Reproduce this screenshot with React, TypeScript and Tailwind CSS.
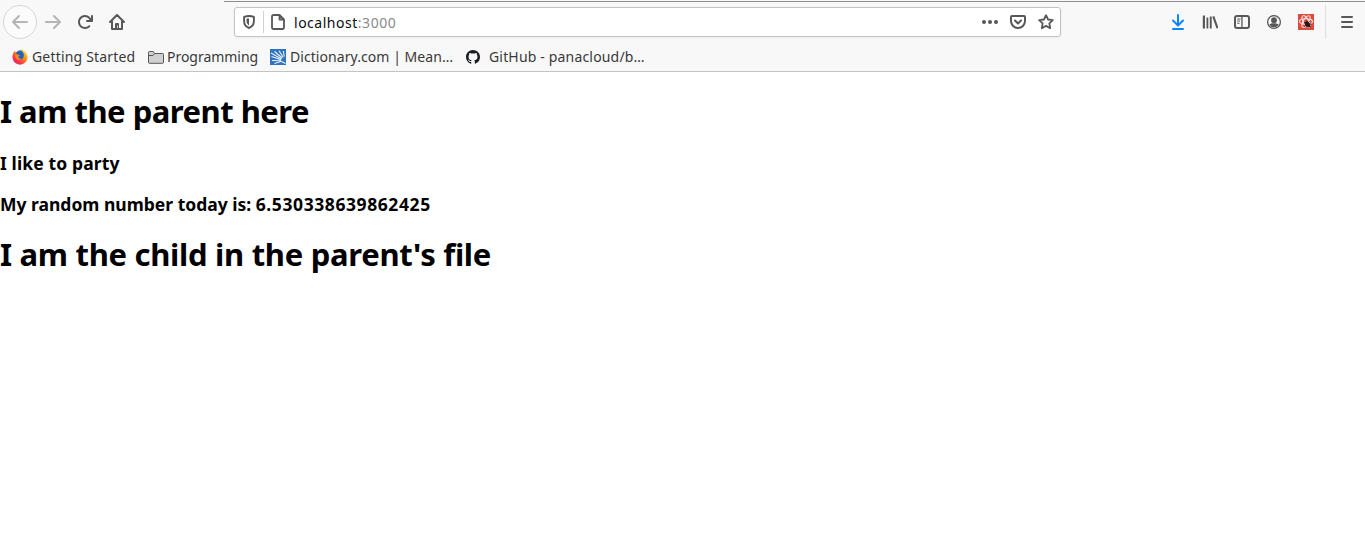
import type { ReactNode } from "react";

function Icon({ children, className = "h-4 w-4" }: { children: ReactNode; className?: string }) {
  return (
    <svg viewBox="0 0 16 16" className={"block shrink-0 " + className} fill="currentColor">
      {children}
    </svg>
  );
}

const stroke = { fill: "none", stroke: "currentColor", strokeWidth: 2, strokeLinecap: "round", strokeLinejoin: "round" } as const;

function Toolbar() {
  return (
    <div className="flex h-[42px] items-center pt-[2px] text-[#58585a]">
      <div className="ml-[3px] flex h-[34px] w-[34px] items-center justify-center rounded-full border border-[#d6d6d7] bg-[#fbfbfb] text-[#b5b5b6]">
        <Icon>
          <path d="M15 7H3.414l4.293-4.293a1 1 0 0 0-1.414-1.414l-6 6a1 1 0 0 0 0 1.414l6 6a1 1 0 0 0 1.414-1.414L3.414 9H15a1 1 0 0 0 0-2z" />
        </Icon>
      </div>
      <Icon className="ml-2 h-4 w-4 text-[#b5b5b6]">
        <path d="M15.707 7.293l-6-6a1 1 0 0 0-1.414 1.414L12.586 7H1a1 1 0 0 0 0 2h11.586l-4.293 4.293a1 1 0 1 0 1.414 1.414l6-6a1 1 0 0 0 0-1.414z" />
      </Icon>
      <Icon className="ml-4 h-4 w-4">
        <path d="M15 1a1 1 0 0 0-1 1v2.418A6.995 6.995 0 1 0 8 15a6.954 6.954 0 0 0 4.950-2.050 1 1 0 0 0-1.414-1.414A5.019 5.019 0 1 1 12.549 6H10a1 1 0 0 0 0 2h5a1 1 0 0 0 1-1V2a1 1 0 0 0-1-1z" />
      </Icon>
      <Icon className="ml-4 h-4 w-4">
        <path d="M1 8l7-7 7 7M3 7.500V15h10V7.500" {...stroke} />
        <path d="M6 14V10a1 1 0 0 1 1-1h2a1 1 0 0 1 1 1v4H8.800v-2.500H8V14z" />
      </Icon>
      <div className="ml-[109px] flex h-[30px] w-[827px] items-center rounded-[3px] border border-[#c3c3c4] bg-white shadow-[0_1px_3px_rgba(0,0,0,0.05)]">
        <Icon className="ml-[6px] h-4 w-4">
          <path d="M8 2c1.500 0 3.300.3 4.900.9v4.200c0 3.500-1.800 5.800-4.900 6.900-3.100-1.100-4.900-3.400-4.900-6.900V2.900C4.700 2.300 6.500 2 8 2z" {...stroke} strokeWidth={1.900} />
          <path d="M8 4.400v7C6.300 10.400 5.500 9 5.500 7V4.800C6.300 4.500 7.200 4.400 8 4.400z" />
        </Icon>
        <div className="mx-[6px] h-[22px] w-px bg-[#d2d2d3]" />
        <Icon>
          <path d="M3.500 1H9.500L14 5.500V13.500A1.500 1.500 0 0 1 12.500 15H3.500A1.500 1.500 0 0 1 2 13.500V2.500A1.500 1.500 0 0 1 3.500 1zM9.500 1.500V5.500H13.500" {...stroke} strokeWidth={1.800} />
        </Icon>
        <div className="ml-2 whitespace-nowrap pt-px font-['Noto_Sans',sans-serif] text-[14px] leading-5 tracking-[0.52px] text-[#0c0c0d]">
          localhost<span className="text-[#8a8a8c]">:3000</span>
        </div>
        <div className="ml-auto mr-[6px] flex gap-3">
          <Icon>
            <circle cx="2" cy="8" r="2" />
            <circle cx="8" cy="8" r="2" />
            <circle cx="14" cy="8" r="2" />
          </Icon>
          <Icon>
            <path d="M2 2h12a1 1 0 0 1 1 1v4a7 7 0 0 1-14 0V3a1 1 0 0 1 1-1zM5 6.500l3 3 3-3" {...stroke} />
          </Icon>
          <Icon>
            <path d="M8 1.200l2.050 4.300 4.800.65-3.500 3.300.85 4.750L8 11.900l-4.200 2.300.85-4.750-3.500-3.300 4.800-.65z" {...stroke} strokeWidth={1.800} />
          </Icon>
        </div>
      </div>
      <div className="ml-auto flex items-center">
        <Icon className="h-4 w-4 text-[#0a84ff]">
          <path d="M8 1v9.500M3 6.500L8 11.500 13 6.500M3 15h10" {...stroke} />
        </Icon>
        <Icon className="ml-4 h-4 w-4">
          <path d="M.8 1.500h2.200v13H.8zM4.500 3.500h1.800v11H4.500zM7.800 2.500h1.900v12H7.800zM10.300 2.800l2-.7 4.200 11.700-2 .7z" />
        </Icon>
        <Icon className="ml-4 h-4 w-4">
          <rect x="1" y="2" width="14" height="12" rx="2" {...stroke} />
          <path d="M7.300 2.500h1.300v11H7.300zM3.200 4.500H6.500v1H3.200zM3.200 6.600H6v1H3.200zM3.200 8.700H5.500v1H3.200z" />
        </Icon>
        <Icon className="ml-4 h-4 w-4">
          <circle cx="8" cy="8" r="6.400" {...stroke} strokeWidth={1.300} />
          <circle cx="8" cy="6.200" r="2.900" />
          <path d="M3.400 10.300c1.500-.6 2.200-.8 2.800-1.100h3.600c.6.300 1.300.5 2.800 1.100A5 5 0 0 1 3.400 10.300z" />
        </Icon>
        <Icon className="ml-4 h-4 w-4">
          <rect width="16" height="16" fill="#dd4b3e" />
          <g fill="none" stroke="#f8dcd8" strokeWidth="1.100">
            <ellipse cx="8" cy="7.500" rx="6.500" ry="2.700" />
            <ellipse cx="8" cy="7.500" rx="6.500" ry="2.700" transform="rotate(60 8 7.500)" />
            <ellipse cx="8" cy="7.500" rx="6.500" ry="2.700" transform="rotate(120 8 7.500)" />
          </g>
          <g fill="#2a1816" stroke="#2a1816">
            <ellipse cx="9.500" cy="10.300" rx="1.900" ry="2.700" transform="rotate(-35 9.500 10.300)" />
            <path d="M6 8.500l2 1M8 6.500l1 2M6 12.500l2-1M11.500 7.500l-1 1M11 10h2.500M11 12.500l2 .5" strokeWidth=".9" />
          </g>
        </Icon>
        <div className="ml-[11px] h-[34px] w-px bg-[#dedede]" />
        <Icon className="ml-[13px] mr-[10px] h-4 w-4">
          <path d="M3 3h10M3 8h10M3 13h10" {...stroke} />
        </Icon>
      </div>
    </div>
  );
}

function Bookmarks() {
  return (
    <div className="flex h-[29px] items-center whitespace-nowrap pl-3 font-['Noto_Sans',sans-serif] text-[14px] text-[#38383a]">
      <Icon>
        <defs>
          <linearGradient id="flame" x1="1" y1="0" x2=".15" y2="1">
            <stop offset="0" stopColor="#fff44f" />
            <stop offset=".4" stopColor="#ff980e" />
            <stop offset=".75" stopColor="#ff3647" />
            <stop offset="1" stopColor="#e31587" />
          </linearGradient>
        </defs>
        <path d="M1.500 3.500L2.800 2l.8 1.200C5 2.500 6 2.500 7 2.700L9.500.5C12.500 2 15.500 4.500 15.500 8.500A7.500 7.200 0 0 1 .5 8.500C.5 6.500 1 5 1.500 3.500z" fill="url(#flame)" />
        <path d="M4.500 3.200C6 1.500 8 1.200 9.200 1.800c2.300 1.500 3 3.500 2.500 5.700-.4 2.200-2.400 3.500-4.500 3.100-2-.4-3.300-1.800-3-3.600z" fill="#1d63c8" />
        <path d="M3.200 5.500l2.300-.3 2.300 1.300-1.500 1.300c.2 1.700 1.700 2.200 3.200 1.500-.8 2-3.800 2.300-5.200.5C3.300 8.500 3 7 3.200 5.500z" fill="#ff8a16" />
      </Icon>
      <span className="ml-1 w-[103px] tracking-[0.18px]">Getting Started</span>
      <Icon className="ml-[13px] h-4 w-4">
        <path d="M.5 13.500V3.300c0-.5.300-.8.800-.8h4l1.200 2h8.200c.5 0 .8.300.8.800v8.200c0 .5-.3.800-.8.800H1.300c-.5 0-.8-.3-.8-.8z" fill="#d0d0d0" stroke="#58585a" />
        <path d="M.5 6.500H5L6.500 4.500" fill="none" stroke="#58585a" />
      </Icon>
      <span className="ml-[3px] w-[91px] tracking-[-0.03px]">Programming</span>
      <Icon className="ml-3 h-4 w-4">
        <rect width="16" height="16" fill="#3273c0" />
        <path d="M4.500 14.500l7-2.200M2 11.500l9 .3M1.500 7.500l9.500 3.300M1 4l10.500 6M4.500 2.500L12.200 9M9 1.800l4.200 6.500M13.300 2l1 5.500M11.500 12.500l4 2" fill="none" stroke="#e9f2fb" strokeWidth="1.100" />
      </Icon>
      <span className="ml-1 w-[163px] tracking-[0.06px]">Dictionary.com | Mean…</span>
      <Icon className="ml-[13px] h-[14px] w-[14px] text-[#1b1f23]">
        <path d="M8 0C3.580 0 0 3.580 0 8c0 3.540 2.290 6.530 5.470 7.590.4.070.55-.17.55-.38 0-.19-.01-.82-.01-1.490-2.010.37-2.530-.49-2.690-.94-.09-.23-.48-.94-.82-1.130-.28-.15-.68-.52-.01-.53.63-.01 1.080.58 1.230.82.72 1.210 1.870.87 2.330.66.070-.52.28-.87.51-1.070-1.780-.2-3.640-.89-3.640-3.950 0-.87.31-1.590.82-2.150-.08-.2-.36-1.020.08-2.120 0 0 .67-.21 2.200.82.64-.18 1.320-.27 2-.27s1.360.09 2 .27c1.530-1.040 2.200-.82 2.200-.82.44 1.100.16 1.920.08 2.120.51.56.82 1.270.82 2.150 0 3.070-1.870 3.750-3.650 3.950.29.25.54.73.54 1.480 0 1.070-.01 1.930-.01 2.200 0 .21.15.46.55.38A8.010 8.010 0 0 0 16 8c0-4.420-3.580-8-8-8z" />
      </Icon>
      <span className="ml-[9px] tracking-[0.17px]">GitHub - panacloud/b…</span>
    </div>
  );
}

export default function App() {
  return (
    <div className="flex h-[540px] w-[1365px] flex-col overflow-hidden bg-white">
      <div className="h-[72px] shrink-0 border-b border-[#c4c4c4] bg-[#f8f8f8]">
        <div className="-mb-[2px] ml-[224px] h-[2px] border-b border-[#8f8f8f]" />
        <Toolbar />
        <Bookmarks />
      </div>
      <main className="flex flex-col items-start whitespace-nowrap font-['Noto_Sans',sans-serif] text-black">
        <h1 className="mt-[21px] text-[31px] font-bold leading-[37px] tracking-[-0.5px]">I am the parent here</h1>
        <h3 className="mt-[23px] text-[17.5px] font-bold leading-[21px] tracking-[0.13px]">I like to party</h3>
        <h3 className="mt-5 text-[17.5px] font-bold leading-[21px]">
          My random number today is: <span className="tracking-[0.58px]">6.530338639862425</span>
        </h3>
        <h1 className="mt-[21px] text-[31px] font-bold leading-[37px] tracking-[-0.29px]">I am the child in the parent's file</h1>
      </main>
    </div>
  );
}
